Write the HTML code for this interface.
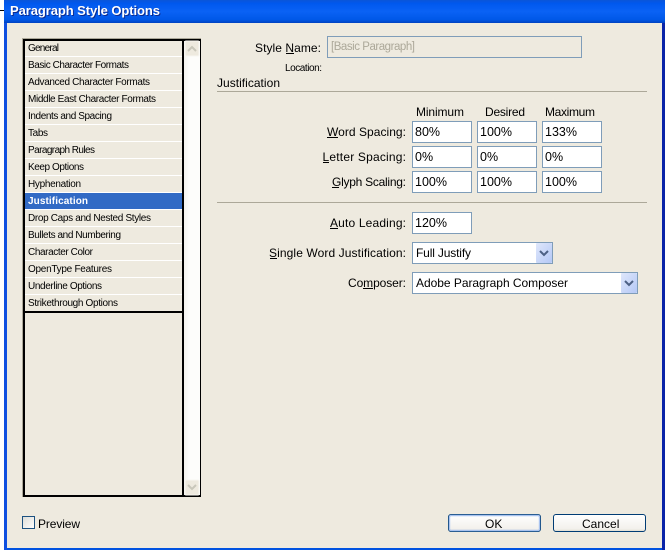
<!DOCTYPE html>
<html><head><meta charset="utf-8"><title>Paragraph Style Options</title>
<style>
html,body{margin:0;padding:0;background:#fff;width:665px;height:550px;overflow:hidden}
svg{display:block}
text{font-family:"Liberation Sans",Arial,sans-serif;font-size:12px;fill:#000}
.s{font-size:10px}
.v{font-size:12.5px}
</style></head><body>
<svg width="665" height="550" viewBox="0 0 665 550" xmlns="http://www.w3.org/2000/svg">
<defs>
<linearGradient id="tb" x1="0" y1="0" x2="0" y2="1">
<stop offset="0" stop-color="#0a55d8"/><stop offset=".15" stop-color="#0058ee"/><stop offset=".5" stop-color="#0a62f5"/><stop offset=".85" stop-color="#0058e8"/><stop offset="1" stop-color="#0042c0"/>
</linearGradient>
<linearGradient id="cb" x1="0" y1="0" x2="1" y2="1"><stop offset="0" stop-color="#dcdcd6"/><stop offset="1" stop-color="#ffffff"/></linearGradient>
<linearGradient id="btn" x1="0" y1="0" x2="0" y2="1"><stop offset="0" stop-color="#ffffff"/><stop offset=".85" stop-color="#f3f1ec"/><stop offset="1" stop-color="#dcd8cc"/></linearGradient>
<linearGradient id="dd" x1="0" y1="0" x2="1" y2="1"><stop offset="0" stop-color="#dfe7fb"/><stop offset="1" stop-color="#b4c8f6"/></linearGradient>
<linearGradient id="sc" x1="0" y1="0" x2="1" y2="0"><stop offset="0" stop-color="#f4f3ee"/><stop offset=".3" stop-color="#fdfdfb"/><stop offset="1" stop-color="#fdfdfb"/></linearGradient>
</defs>

<!-- window frame -->
<rect x="0" y="0" width="665" height="550" fill="#fff"/>
<rect x="4" y="0" width="661" height="550" fill="#0052e0"/>
<rect x="4" y="4" width="3" height="546" fill="#0f4fe0"/>
<rect x="662" y="22" width="3" height="528" fill="#0a24a8"/>
<rect x="4" y="0" width="661" height="23" fill="url(#tb)"/>
<rect x="7" y="23" width="655" height="525" fill="#eeeadf"/>
<rect x="0" y="10" width="4" height="1" fill="#000"/>
<text x="11" y="16" font-weight="bold" style="font-size:13px;fill:#0a2a90" textLength="150" lengthAdjust="spacing">Paragraph Style Options</text>
<text x="10" y="15" font-weight="bold" style="font-size:13px;fill:#fff" textLength="150" lengthAdjust="spacing">Paragraph Style Options</text>

<!-- list -->
<rect x="22" y="38" width="179" height="459" fill="#aca899"/>
<rect x="23" y="39" width="178" height="458" fill="#000"/>
<rect x="25" y="41" width="157" height="454" fill="#eeeadf"/>
<rect x="184" y="41" width="16" height="454" fill="url(#sc)"/>

<!-- rows -->
<g fill="#fff">
<rect x="25" y="56" width="157" height="1"/><rect x="25" y="73" width="157" height="1"/><rect x="25" y="90" width="157" height="1"/><rect x="25" y="107" width="157" height="1"/><rect x="25" y="124" width="157" height="1"/><rect x="25" y="141" width="157" height="1"/><rect x="25" y="158" width="157" height="1"/><rect x="25" y="175" width="157" height="1"/><rect x="25" y="192" width="157" height="1"/><rect x="25" y="209" width="157" height="1"/><rect x="25" y="226" width="157" height="1"/><rect x="25" y="243" width="157" height="1"/><rect x="25" y="260" width="157" height="1"/><rect x="25" y="277" width="157" height="1"/><rect x="25" y="294" width="157" height="1"/>
</g>
<rect x="25" y="193" width="157" height="16" fill="#316ac5"/>
<rect x="25" y="311" width="157" height="2" fill="#000"/>

<text class="s" x="28" y="51" textLength="31" lengthAdjust="spacing">General</text>
<text class="s" x="28" y="68" textLength="101" lengthAdjust="spacing">Basic Character Formats</text>
<text class="s" x="28" y="85" textLength="122" lengthAdjust="spacing">Advanced Character Formats</text>
<text class="s" x="28" y="102" textLength="128" lengthAdjust="spacing">Middle East Character Formats</text>
<text class="s" x="28" y="119" textLength="84" lengthAdjust="spacing">Indents and Spacing</text>
<text class="s" x="28" y="136" textLength="20" lengthAdjust="spacing">Tabs</text>
<text class="s" x="28" y="153" textLength="67" lengthAdjust="spacing">Paragraph Rules</text>
<text class="s" x="28" y="170" textLength="56" lengthAdjust="spacing">Keep Options</text>
<text class="s" x="28" y="187" textLength="53" lengthAdjust="spacing">Hyphenation</text>
<text class="s" x="28" y="204" font-weight="bold" style="fill:#fff" textLength="60" lengthAdjust="spacing">Justification</text>
<text class="s" x="28" y="221" textLength="123" lengthAdjust="spacing">Drop Caps and Nested Styles</text>
<text class="s" x="28" y="238" textLength="93" lengthAdjust="spacing">Bullets and Numbering</text>
<text class="s" x="28" y="255" textLength="65" lengthAdjust="spacing">Character Color</text>
<text class="s" x="28" y="272" textLength="84" lengthAdjust="spacing">OpenType Features</text>
<text class="s" x="28" y="289" textLength="74" lengthAdjust="spacing">Underline Options</text>
<text class="s" x="28" y="306" textLength="90" lengthAdjust="spacing">Strikethrough Options</text>

<!-- scrollbar buttons -->
<rect x="185" y="41" width="14" height="15" rx="1" fill="#eeeadf" stroke="#f8f7f2"/>
<path d="M188 51 L192 47 L196 51" fill="none" stroke="#c9c7ba" stroke-width="2"/>
<rect x="185" y="480" width="14" height="15" rx="1" fill="#eeeadf" stroke="#f8f7f2"/>
<path d="M188 485 L192 489 L196 485" fill="none" stroke="#c9c7ba" stroke-width="2"/>

<!-- Style name -->
<text x="255" y="52" textLength="66" lengthAdjust="spacing">Style Name:</text>
<rect x="286" y="53" width="8" height="1" fill="#000"/>
<rect x="327.5" y="36.5" width="254" height="21" fill="#eeeadf" stroke="#7f9db9"/>
<text x="331" y="50" style="fill:#aca899;font-size:11.5px" textLength="84" lengthAdjust="spacing">[Basic Paragraph]</text>
<text class="s" x="285" y="71" textLength="37" lengthAdjust="spacing">Location:</text>
<text x="217" y="87" textLength="63" lengthAdjust="spacing">Justification</text>
<rect x="217" y="91" width="430" height="1" fill="#aca899"/>

<!-- Column headers -->
<text x="416" y="116" textLength="48" lengthAdjust="spacing">Minimum</text>
<text x="485" y="116" textLength="40" lengthAdjust="spacing">Desired</text>
<text x="545" y="116" textLength="50" lengthAdjust="spacing">Maximum</text>

<!-- Labels -->
<text x="327" y="136" textLength="79" lengthAdjust="spacing">Word Spacing:</text>
<rect x="327" y="137" width="11" height="1" fill="#000"/>
<text x="322.5" y="161" textLength="83.5" lengthAdjust="spacing">Letter Spacing:</text>
<rect x="323" y="162" width="6" height="1" fill="#000"/>
<text x="332" y="186" textLength="74" lengthAdjust="spacing">Glyph Scaling:</text>
<rect x="332" y="187" width="7" height="1" fill="#000"/>

<!-- Inputs -->
<g fill="#fff" stroke="#7f9db9">
<rect x="412.5" y="121.5" width="59" height="21"/><rect x="477.5" y="121.5" width="59" height="21"/><rect x="542.5" y="121.5" width="59" height="21"/>
<rect x="412.5" y="146.5" width="59" height="21"/><rect x="477.5" y="146.5" width="59" height="21"/><rect x="542.5" y="146.5" width="59" height="21"/>
<rect x="412.5" y="171.5" width="59" height="21"/><rect x="477.5" y="171.5" width="59" height="21"/><rect x="542.5" y="171.5" width="59" height="21"/>
<rect x="412.5" y="212.5" width="59" height="21"/>
<rect x="412.5" y="242.5" width="140" height="21"/>
<rect x="412.5" y="272.5" width="225" height="21"/>
</g>
<text class="v" x="415" y="136">80%</text>
<text class="v" x="480" y="136">100%</text>
<text class="v" x="545" y="136">133%</text>
<text class="v" x="415" y="161">0%</text>
<text class="v" x="480" y="161">0%</text>
<text class="v" x="545" y="161">0%</text>
<text class="v" x="415" y="186">100%</text>
<text class="v" x="480" y="186">100%</text>
<text class="v" x="545" y="186">100%</text>

<rect x="217" y="202" width="430" height="1" fill="#aca899"/>

<text x="330" y="227" textLength="76" lengthAdjust="spacing">Auto Leading:</text>
<rect x="330" y="228" width="8" height="1" fill="#000"/>
<text class="v" x="415" y="227">120%</text>

<text x="269" y="257" textLength="137" lengthAdjust="spacing">Single Word Justification:</text>
<rect x="270" y="258" width="7" height="1" fill="#000"/>
<text x="416" y="257" textLength="55" lengthAdjust="spacing">Full Justify</text>
<rect x="536" y="243" width="16" height="20" rx="1" fill="url(#dd)"/>
<path d="M540 251 L544 255 L548 251" fill="none" stroke="#4d6185" stroke-width="2"/>

<text x="348" y="287" textLength="58" lengthAdjust="spacing">Composer:</text>
<rect x="363" y="288" width="10" height="1" fill="#000"/>
<text x="416" y="287" textLength="152" lengthAdjust="spacing">Adobe Paragraph Composer</text>
<rect x="621" y="273" width="16" height="20" rx="1" fill="url(#dd)"/>
<path d="M625 281 L629 285 L633 281" fill="none" stroke="#4d6185" stroke-width="2"/>

<!-- Preview -->
<rect x="22.5" y="516.5" width="12" height="12" fill="url(#cb)" stroke="#1c5180"/>
<text x="38" y="528" textLength="42" lengthAdjust="spacing">Preview</text>

<!-- Buttons -->
<rect x="448.5" y="514.5" width="92" height="17" rx="2.5" fill="url(#btn)" stroke="#003c74"/>
<rect x="449.5" y="515.5" width="90" height="15" rx="1.5" fill="none" stroke="#a9c3ef" stroke-width="1.4"/>
<text x="485" y="528">OK</text>
<rect x="553.5" y="514.5" width="92" height="17" rx="2.5" fill="url(#btn)" stroke="#003c74"/>
<text x="582" y="528">Cancel</text>
</svg>
</body></html>
